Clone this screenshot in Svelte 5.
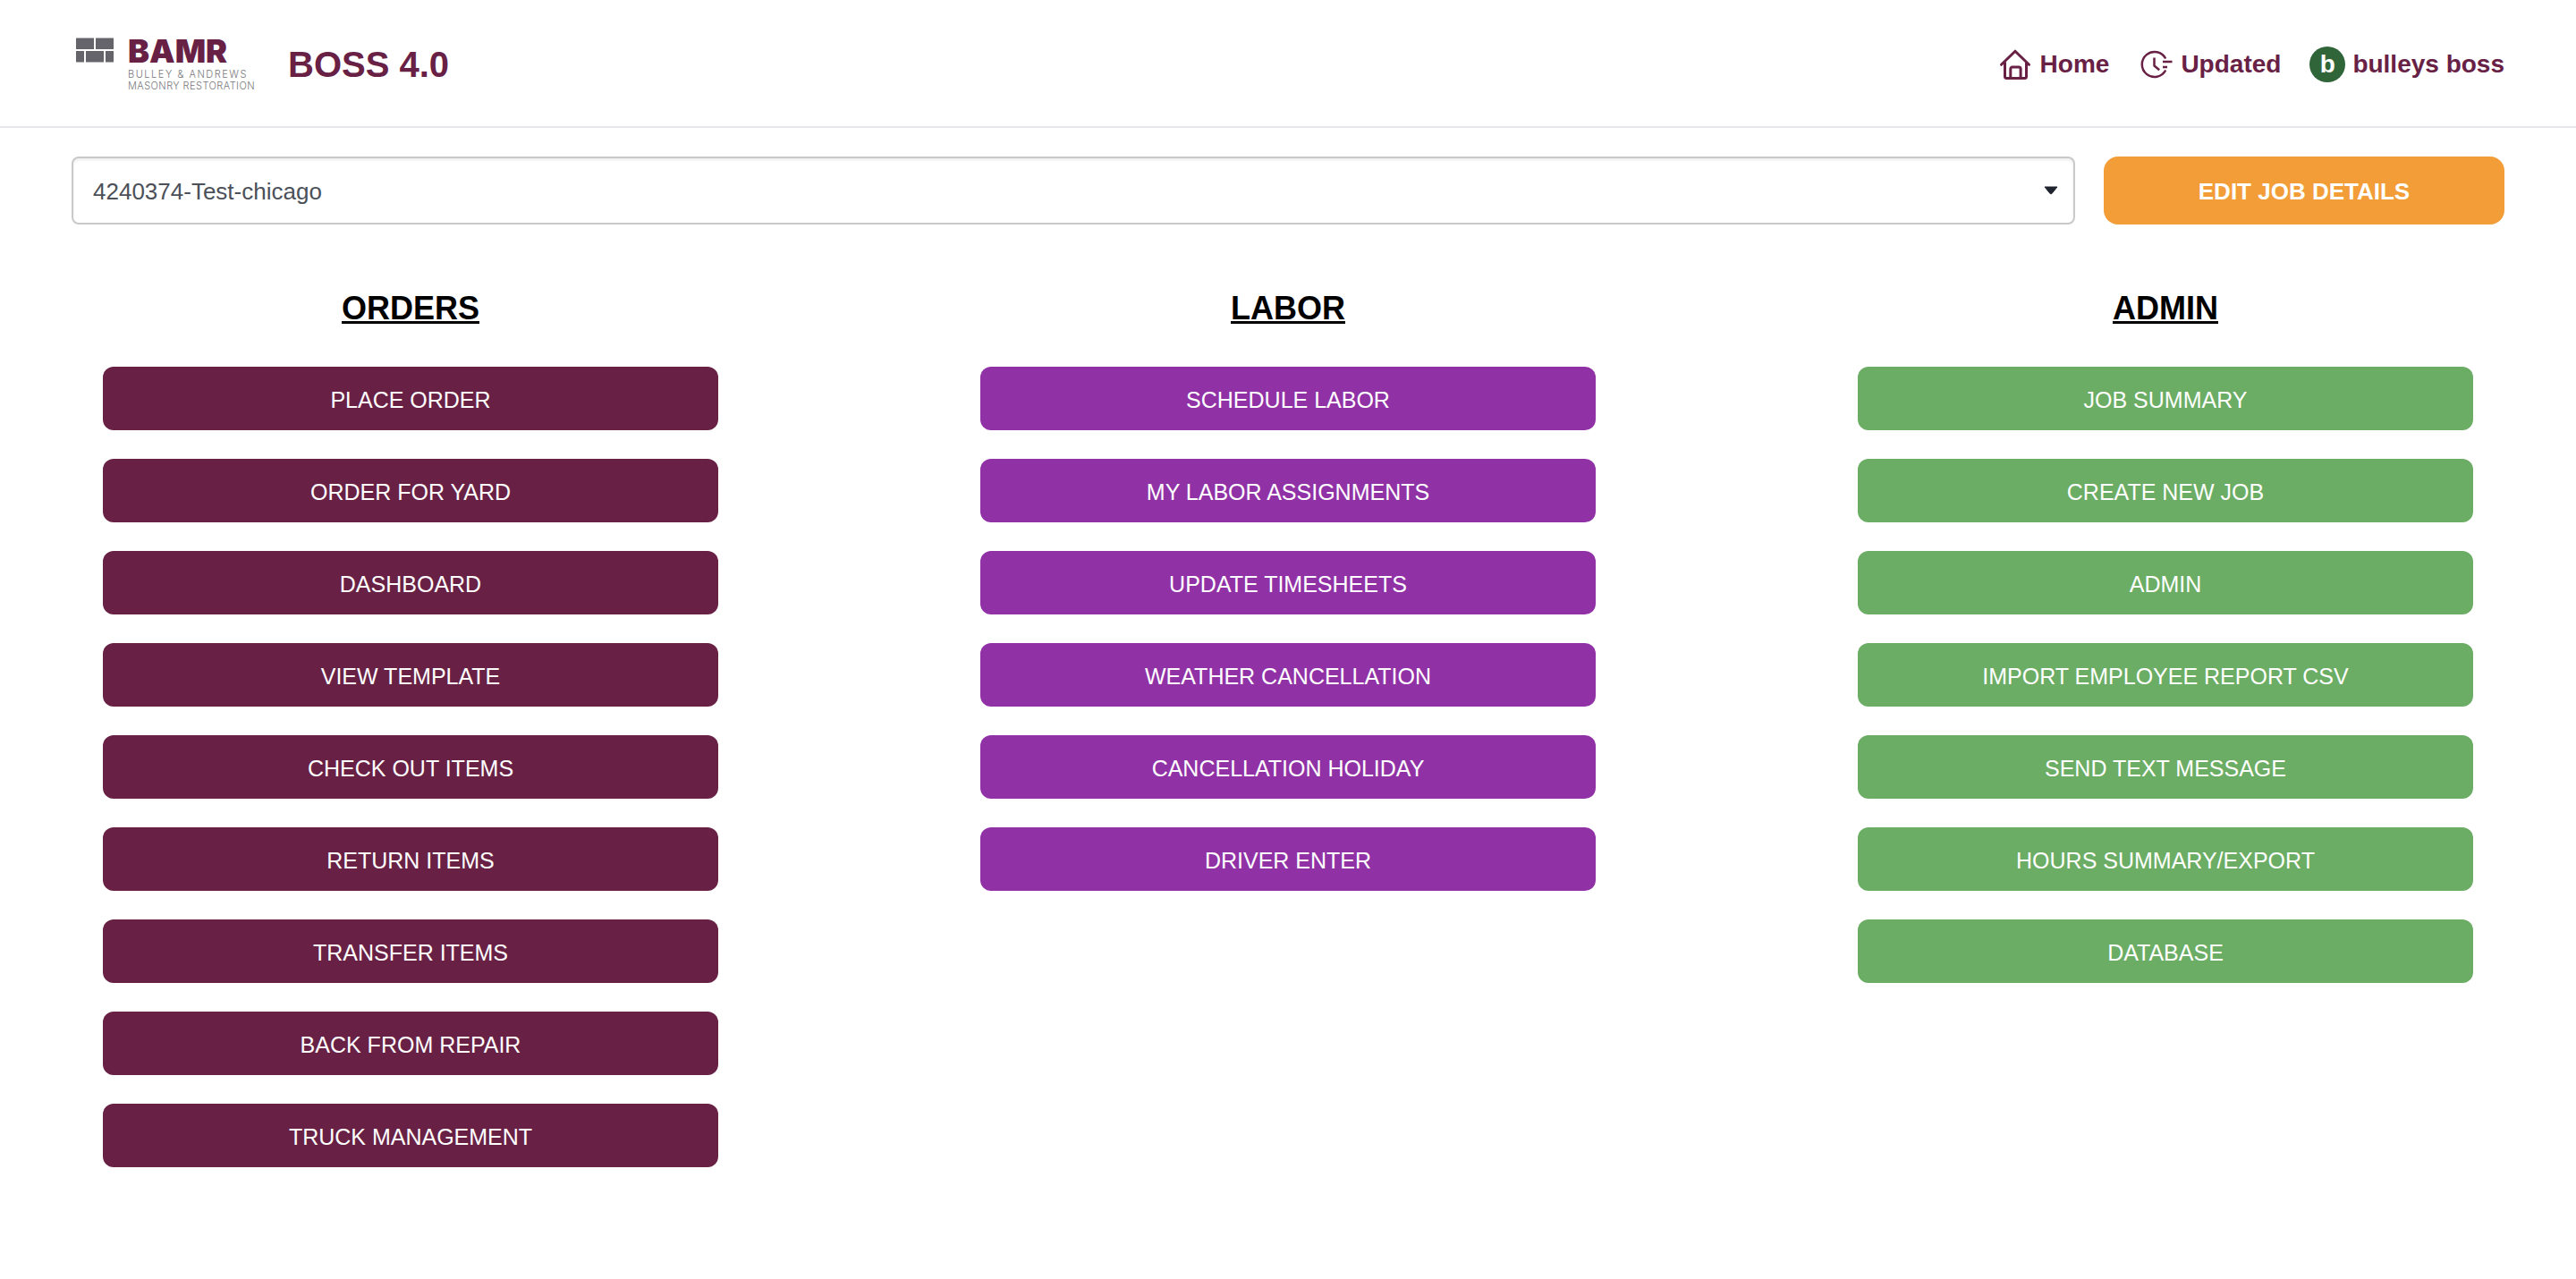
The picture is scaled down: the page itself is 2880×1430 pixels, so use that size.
<script>
  const jobs = ['4240374-Test-chicago'];
  let job = $state(jobs[0]);

  const groups = [
    {
      title: 'ORDERS',
      tone: 'maroon',
      actions: [
        'PLACE ORDER',
        'ORDER FOR YARD',
        'DASHBOARD',
        'VIEW TEMPLATE',
        'CHECK OUT ITEMS',
        'RETURN ITEMS',
        'TRANSFER ITEMS',
        'BACK FROM REPAIR',
        'TRUCK MANAGEMENT'
      ]
    },
    {
      title: 'LABOR',
      tone: 'purple',
      actions: [
        'SCHEDULE LABOR',
        'MY LABOR ASSIGNMENTS',
        'UPDATE TIMESHEETS',
        'WEATHER CANCELLATION',
        'CANCELLATION HOLIDAY',
        'DRIVER ENTER'
      ]
    },
    {
      title: 'ADMIN',
      tone: 'green',
      actions: [
        'JOB SUMMARY',
        'CREATE NEW JOB',
        'ADMIN',
        'IMPORT EMPLOYEE REPORT CSV',
        'SEND TEXT MESSAGE',
        'HOURS SUMMARY/EXPORT',
        'DATABASE'
      ]
    }
  ];
</script>

<header>
  <div class="brand">
    <svg class="logo" viewBox="0 0 210 64" role="img" aria-label="BAMR Bulley &amp; Andrews Masonry Restoration">
      <g class="bricks">
        <rect x="5" y="2.500" width="20" height="12.500" />
        <rect x="27" y="2.500" width="20" height="12.500" />
        <rect x="5" y="17" width="9" height="12.500" />
        <rect x="16" y="17" width="20" height="12.500" />
        <rect x="38" y="17" width="9" height="12.500" />
      </g>
      <text class="name" x="63" y="30">BAMR</text>
      <text class="line wide" x="63" y="47">BULLEY &amp; ANDREWS</text>
      <text class="line" x="63" y="60">MASONRY RESTORATION</text>
    </svg>
    <h1>BOSS 4.0</h1>
  </div>
  <nav>
    <a href="#home">
      <svg class="icon" viewBox="0 0 40 40" aria-hidden="true">
        <path d="M4.500 20.300 20 5.200l15.500 15.100M8.500 18v15.500a2 2 0 0 0 2 2h20a2 2 0 0 0 2-2V18M14.800 35V25a2 2 0 0 1 2-2h7.300a2 2 0 0 1 2 2v10" />
      </svg>
      Home
    </a>
    <a href="#updated">
      <svg class="icon clock" viewBox="0 0 40 40" aria-hidden="true">
        <path d="M31.200 13.500A14 14 0 1 0 31.200 26.500M18.500 12.500v9l5.700 4.700M28 17h10.500M28 23h5" />
      </svg>
      Updated
    </a>
    <a href="#account"><span class="avatar">b</span>bulleys boss</a>
  </nav>
</header>

<main>
  <form class="job-bar" onsubmit={(e) => e.preventDefault()}>
    <div class="picker">
      <select aria-label="Job" bind:value={job}>
        {#each jobs as name}
          <option value={name}>{name}</option>
        {/each}
      </select>
      <svg class="caret" viewBox="0 0 16 10" aria-hidden="true"><path d="M1 1h14L8.700 8.700h-1.400z" /></svg>
    </div>
    <button class="edit" type="submit">EDIT JOB DETAILS</button>
  </form>

  <div class="groups">
    {#each groups as group}
      <section class={group.tone}>
        <h2>{group.title}</h2>
        {#each group.actions as action}
          <button type="button">{action}</button>
        {/each}
      </section>
    {/each}
  </div>
</main>

<style>
  :global(body) {
    margin: 0;
    background: #fff;
    font-family: 'Liberation Sans', Arial, Helvetica, sans-serif;
  }

  header {
    display: flex;
    align-items: center;
    justify-content: space-between;
    padding: 40px 80px 37px;
    border-bottom: 2px solid #e5e5ea;
    color: #682145;
  }

  .brand,
  nav,
  nav a {
    display: flex;
    align-items: center;
  }

  .brand,
  nav {
    gap: 32px;
  }

  .logo {
    width: 210px;
    height: 64px;
    overflow: visible;
  }

  .bricks {
    fill: #66646b;
  }

  .name {
    font: 900 36px Inter, sans-serif;
    fill: #682145;
  }

  .line {
    font: 300 11px Inter, sans-serif;
    letter-spacing: 0.04em;
    fill: #77777b;
  }

  .wide {
    letter-spacing: 0.14em;
  }

  h1 {
    margin: 0;
    font-size: 40px;
    line-height: 48px;
  }

  nav a {
    gap: 8px;
    color: inherit;
    font-size: 28px;
    font-weight: 700;
    line-height: 40px;
    text-decoration: none;
  }

  .icon {
    width: 40px;
    height: 40px;
    fill: none;
    stroke: currentColor;
    stroke-width: 3;
    stroke-linecap: round;
    stroke-linejoin: round;
  }

  .clock {
    stroke-width: 2.5;
    stroke-linecap: butt;
  }

  .avatar {
    width: 40px;
    height: 40px;
    border-radius: 50%;
    background: #30653a;
    color: #fff;
    text-align: center;
  }

  .job-bar {
    display: grid;
    grid-template-columns: 5fr 1fr;
    gap: 32px;
    padding: 32px 80px 0;
  }

  .picker {
    display: grid;
    align-items: center;
  }

  select,
  .caret {
    grid-area: 1 / 1;
  }

  select {
    appearance: none;
    width: 100%;
    height: 76px;
    padding: 2px 64px 0 22px;
    border: 2px solid #c9c9c9;
    border-radius: 8px;
    background: #fff;
    box-shadow: inset 0 2px 3px rgba(0, 0, 0, 0.08);
    color: #4b5059;
    font: 26px 'Liberation Sans', Arial, sans-serif;
  }

  .caret {
    justify-self: end;
    width: 16px;
    height: 10px;
    margin-right: 19px;
    fill: #20242e;
    stroke: #20242e;
    stroke-linejoin: round;
    pointer-events: none;
  }

  button {
    padding: 2px 16px 0;
    border: 0;
    border-radius: 12px;
    color: #fff;
    font: 25px/30px 'Liberation Sans', Arial, sans-serif;
    cursor: pointer;
  }

  .edit {
    border-radius: 16px;
    background: #f29d38;
    font-size: 26px;
    font-weight: 700;
  }

  .groups {
    display: grid;
    grid-template-columns: repeat(3, 1fr);
    align-items: start;
    gap: 293px;
    padding: 72px 115px;
  }

  section {
    display: grid;
    gap: 32px;
  }

  section button {
    height: 71px;
  }

  h2 {
    margin: 0 0 11px;
    color: #000;
    font-size: 36px;
    line-height: 44px;
    text-align: center;
    text-decoration: underline;
  }

  .maroon button {
    background: #682145;
  }

  .purple button {
    background: #9032a6;
  }

  .green button {
    background: #6bad64;
  }
</style>
